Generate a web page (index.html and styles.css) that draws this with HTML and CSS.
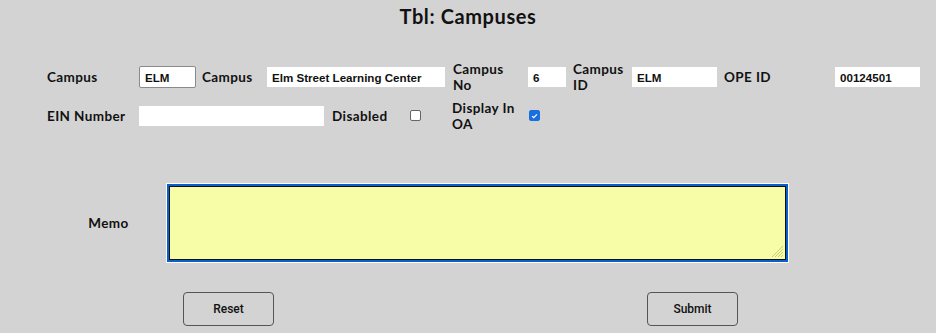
FILE: index.html
```html
<!DOCTYPE html>
<html>
<head>
<meta charset="utf-8">
<link rel="stylesheet" href="styles.css">
</head>
<body>
<div class="page">
  <h1 class="title">Tbl: Campuses</h1>
  <form class="form">
    <div class="row row1">
      <label class="lbl w92">Campus</label>
      <input class="inp bordered w57" value="ELM">
      <label class="lbl w65 ml6">Campus</label>
      <input class="inp w178" value="Elm Street Learning Center">
      <label class="lbl w66 ml8 mr9">Campus No</label>
      <input class="inp w38" value="6">
      <label class="lbl w59 ml7">Campus ID</label>
      <input class="inp w85" value="ELM">
      <label class="lbl w111 ml7">OPE ID</label>
      <input class="inp w85" value="00124501">
    </div>
    <div class="row row2">
      <label class="lbl w92">EIN Number</label>
      <input class="inp w185" value="">
      <label class="lbl w78 ml8">Disabled</label>
      <span class="cb"></span>
      <label class="lbl w77 ml31">Display In OA</label>
      <span class="cb checked"><svg viewBox="0 0 12 12" width="12" height="12"><path d="M2.8 6.2 L5 8.3 L9.3 3.8" fill="none" stroke="#fff" stroke-width="1.6"/></svg></span>
    </div>
    <div class="row memo-row">
      <label class="lbl memo-lbl">Memo</label>
      <div class="memo">
        <svg class="grip" viewBox="0 0 12 12" width="12" height="12"><path d="M11 3 L3 11 M11 6 L6 11 M11 9 L9 11 M11 0 L0 11" stroke="#c9c97a" stroke-width="1"/></svg>
      </div>
    </div>
    <div class="buttons">
      <button type="button" class="btn">Reset</button>
      <button type="button" class="btn">Submit</button>
    </div>
  </form>
</div>
</body>
</html>
```

FILE: styles.css
```css
html, body {
  margin: 0;
  padding: 0;
  background: #d3d3d3;
}
.page {
  width: 936px;
  height: 333px;
  overflow: hidden;
  font-family: Lato, "DejaVu Sans", sans-serif;
  color: #111;
}
.title {
  margin: 0;
  padding-top: 5px;
  text-align: center;
  font-size: 20px;
  letter-spacing: 0.6px;
  font-weight: 700;
  line-height: 22px;
}
.form {
  padding-left: 47px;
  padding-top: 34px;
}
.row {
  display: flex;
  align-items: center;
}
.row1 { height: 32px; }
.row2 { height: 33px; margin-top: 6px; }
.lbl {
  font-size: 13.5px;
  letter-spacing: 0.4px;
  font-weight: 700;
  line-height: 16px;
  flex: none;
}
.inp {
  flex: none;
  box-sizing: border-box;
  height: 20px;
  border: none;
  background: #fff;
  font-family: "Liberation Sans", Arial, sans-serif;
  font-weight: 700;
  font-size: 11.6px;
  color: #111;
  padding: 0 5px;
  outline: none;
}
.bordered {
  height: 22px;
  border: 1px solid #8a8a8a;
  border-radius: 2px;
}
.w92 { width: 92px; }
.w57 { width: 57px; }
.w65 { width: 65px; }
.w66 { width: 66px; }
.w178 { width: 178px; }
.w38 { width: 38px; }
.w59 { width: 59px; }
.w85 { width: 85px; }
.w111 { width: 111px; }
.w185 { width: 185px; }
.w78 { width: 78px; }
.w77 { width: 77px; }
.ml6 { margin-left: 6px; }
.ml7 { margin-left: 7px; }
.ml8 { margin-left: 8px; }
.mr9 { margin-right: 9px; }
.ml31 { margin-left: 31px; }
.cb {
  flex: none;
  box-sizing: border-box;
  width: 11px;
  height: 11px;
  border: 1px solid #666;
  border-radius: 2px;
  background: #fff;
  display: flex;
  align-items: center;
  justify-content: center;
}
.cb.checked {
  background: #1a6fe0;
  border-color: #1a6fe0;
}
.cb svg { width: 10px; height: 10px; }
.memo-row {
  margin-top: 51px;
  height: 80px;
}
.memo-lbl {
  width: 119px;
  text-align: center;
  padding-left: 4px;
  box-sizing: border-box;
}
.memo {
  position: relative;
  box-sizing: border-box;
  width: 617px;
  height: 74px;
  margin-left: 3px;
  background: #f7fca7;
  border: 1px solid #111;
  box-shadow: 0 0 0 2px #0a5fd0, 0 0 0 3px #fff;
}
.grip {
  position: absolute;
  right: 1px;
  bottom: 1px;
}
.buttons {
  display: flex;
  margin-top: 29px;
  padding-left: 136px;
}
.btn {
  box-sizing: border-box;
  width: 91px;
  height: 34px;
  background: #d3d3d3;
  border: 1px solid #555;
  border-radius: 4px;
  font-family: Roboto, "Liberation Sans", sans-serif;
  font-weight: 500;
  font-size: 12px;
  color: #111;
}
.btn + .btn { margin-left: 373px; }
```
